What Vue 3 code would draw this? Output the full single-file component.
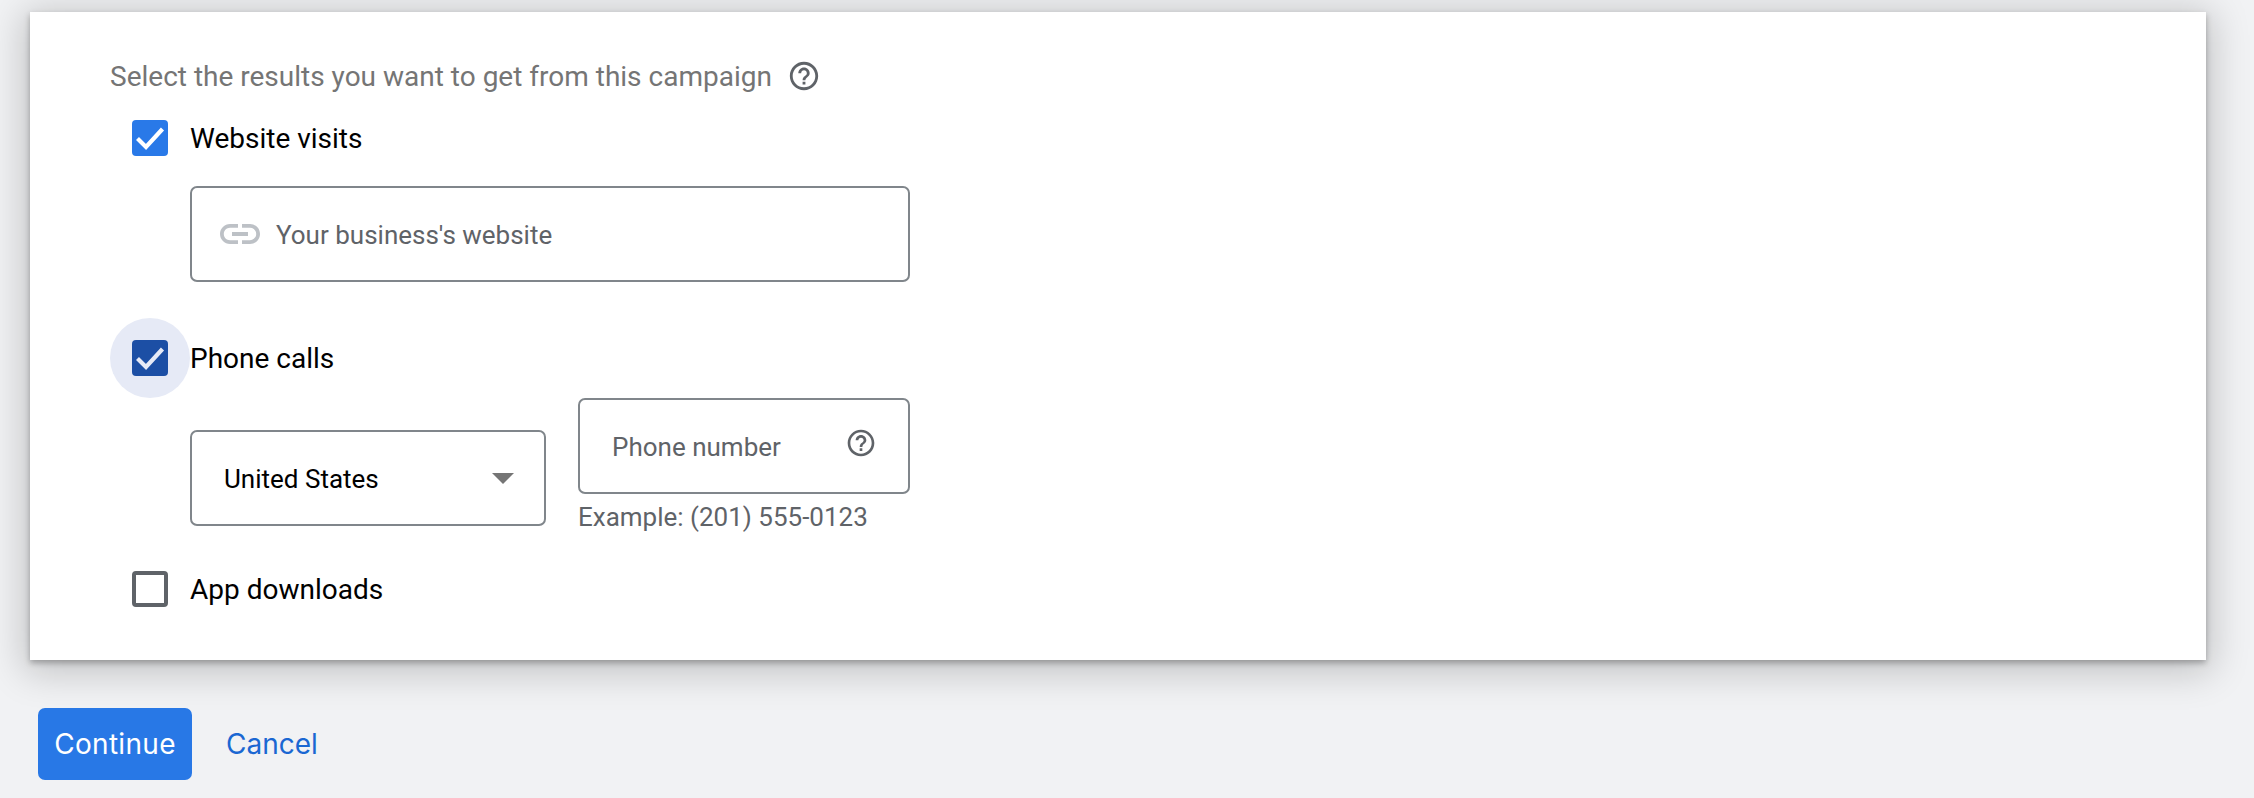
<script setup>
import { ref } from 'vue'

const website = ref(true)
const phone = ref(true)
const app = ref(false)

const helpPath = 'M11 18h2v-2h-2v2zm1-16C6.48 2 2 6.48 2 12s4.48 10 10 10 10-4.48 10-10S17.52 2 12 2zm0 18c-4.41 0-8-3.59-8-8s3.59-8 8-8 8 3.59 8 8-3.59 8-8 8zm0-14c-2.21 0-4 1.79-4 4h2c0-1.1.9-2 2-2s2 .9 2 2c0 2-3 1.75-3 5h2c0-2.25 3-2.5 3-5 0-2.21-1.79-4-4-4z'
</script>

<template>
  <div class="page">
    <div class="card">
      <div class="title">
        <span>Select the results you want to get from this campaign</span>
        <svg class="help title-help" viewBox="0 0 24 24"><path :d="helpPath" /></svg>
      </div>

      <div class="option first" @click="website = !website">
        <span class="check" :class="{ on: website }">
          <svg v-if="website" viewBox="0 0 36 36"><path d="M5.500 18.500l8.500 8.500L30.500 9" /></svg>
        </span>
        <span class="label">Website visits</span>
      </div>
      <div class="field url-field">
        <svg class="link" viewBox="0 0 24 24">
          <path d="M3.900 12c0-1.710 1.390-3.100 3.100-3.100h4V7H7c-2.760 0-5 2.240-5 5s2.240 5 5 5h4v-1.900H7c-1.710 0-3.100-1.390-3.100-3.100zM8 13h8v-2H8v2zm9-6h-4v1.900h4c1.710 0 3.100 1.390 3.100 3.100s-1.390 3.100-3.100 3.100h-4V17h4c2.760 0 5-2.240 5-5s-2.240-5-5-5z" />
        </svg>
        <span class="placeholder">Your business's website</span>
      </div>

      <div class="option second" @click="phone = !phone">
        <span class="ring"></span>
        <span class="check focused" :class="{ on: phone }">
          <svg v-if="phone" viewBox="0 0 36 36"><path d="M5.500 18.500l8.500 8.500L30.500 9" /></svg>
        </span>
        <span class="label">Phone calls</span>
      </div>
      <div class="phone-row">
        <div class="field country">
          <span class="value">United States</span>
          <span class="caret"></span>
        </div>
        <div class="phone-col">
          <div class="field number">
            <span class="placeholder">Phone number</span>
            <svg class="help" viewBox="0 0 24 24"><path :d="helpPath" /></svg>
          </div>
          <div class="hint">Example: (201) 555-0123</div>
        </div>
      </div>

      <div class="option third" @click="app = !app">
        <span class="check" :class="{ on: app }">
          <svg v-if="app" viewBox="0 0 36 36"><path d="M5.500 18.500l8.500 8.500L30.500 9" /></svg>
        </span>
        <span class="label">App downloads</span>
      </div>
    </div>

    <div class="actions">
      <button class="continue">Continue</button>
      <a class="cancel">Cancel</a>
    </div>
  </div>
</template>

<style scoped>
.page {
  height: 798px;
  padding: 12px 48px 0 30px;
  box-sizing: border-box;
  overflow: hidden;
  background: #f1f2f4;
  font-family: Roboto, "Liberation Sans", sans-serif;
}

.card {
  height: 648px;
  box-sizing: border-box;
  padding: 46px 0 0 80px;
  background: #fff;
  box-shadow: 0 3px 6px rgba(0, 0, 0, 0.28), 0 6px 36px 6px rgba(0, 0, 0, 0.2);
}

.title {
  display: flex;
  align-items: center;
  height: 36px;
  font-size: 28px;
  color: #757575;
}

.title-help {
  width: 34px;
  height: 34px;
  margin-left: 15px;
}

.help {
  fill: #5f6368;
}

.option {
  position: relative;
  display: flex;
  align-items: center;
  height: 36px;
  margin-left: 22px;
  cursor: pointer;
}

.option.first {
  margin-top: 26px;
}

.option.second {
  margin-top: 58px;
}

.option.third {
  margin-top: 39px;
}

.check {
  position: relative;
  width: 36px;
  height: 36px;
  box-sizing: border-box;
  border: 4px solid #5f6368;
  border-radius: 4px;
}

.check.on {
  border: none;
  background: #2979e8;
}

.check svg {
  display: block;
  width: 36px;
  height: 36px;
  fill: none;
  stroke: #fff;
  stroke-width: 4.2;
}

.check.focused.on {
  background: #1c4fa5;
}

.check.focused svg {
  stroke: #e6eaf6;
}

/* focus ring behind the box */
.ring {
  position: absolute;
  left: -22px;
  top: -22px;
  width: 80px;
  height: 80px;
  border-radius: 50%;
  background: #e6eaf6;
}

.label {
  position: relative;
  margin-left: 22px;
  font-size: 28px;
  color: #000;
}

.field {
  display: flex;
  align-items: center;
  box-sizing: border-box;
  height: 96px;
  border: 2px solid #80868b;
  border-radius: 7px;
  background: #fff;
}

.url-field {
  width: 720px;
  margin: 30px 0 0 80px;
  padding-left: 24px;
}

.link {
  width: 48px;
  height: 48px;
  margin-right: 12px;
  fill: #bdc1c6;
}

.placeholder {
  position: relative;
  top: 1px;
  font-size: 26px;
  color: #5f6368;
}

.phone-row {
  display: flex;
  align-items: flex-start;
  gap: 32px;
  margin: 22px 0 0 80px;
}

.country {
  justify-content: space-between;
  width: 356px;
  margin-top: 32px;
  padding: 0 30px 0 32px;
}

.value {
  position: relative;
  top: 1px;
  font-size: 26px;
  color: #000;
}

.caret {
  width: 0;
  height: 0;
  border-left: 11px solid transparent;
  border-right: 11px solid transparent;
  border-top: 11px solid #757575;
}

.number {
  justify-content: space-between;
  width: 332px;
  padding: 0 31px 0 32px;
}

.number .help {
  width: 32px;
  height: 32px;
  margin-bottom: 6px;
}

.hint {
  margin-top: 8px;
  font-size: 26px;
  color: #5f6368;
}

.actions {
  display: flex;
  align-items: center;
  margin: 48px 0 0 8px;
}

.continue {
  width: 154px;
  height: 72px;
  padding: 0;
  border: none;
  border-radius: 7px;
  background: #2878e6;
  color: #fff;
  font-family: Inter, sans-serif;
  font-size: 28px;
  letter-spacing: 0.3px;
}

.cancel {
  margin-left: 34px;
  font-family: Inter, sans-serif;
  font-size: 28px;
  color: #1a67d2;
  cursor: pointer;
}
</style>
